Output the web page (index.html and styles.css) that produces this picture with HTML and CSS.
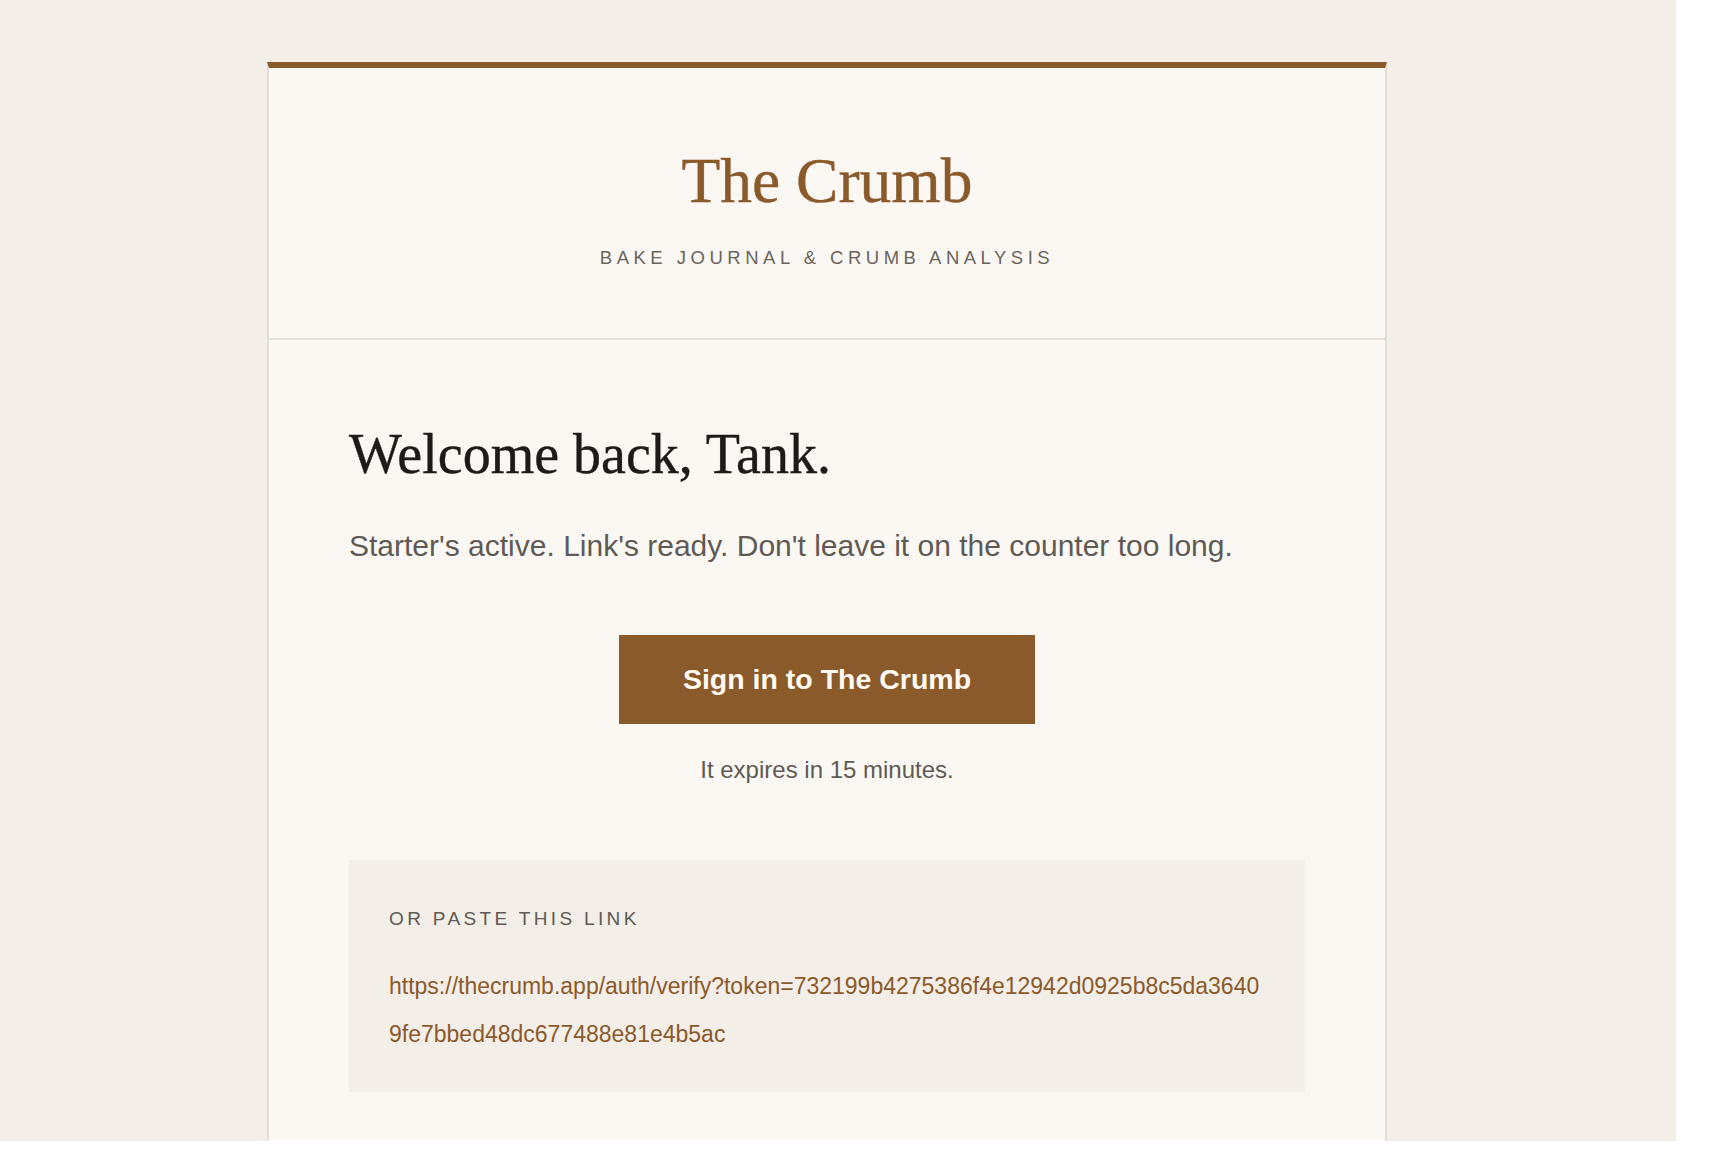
FILE: index.html
```html
<!DOCTYPE html>
<html lang="en">
<head>
<meta charset="utf-8">
<title>The Crumb — Sign in</title>
<link rel="stylesheet" href="styles.css">
</head>
<body>
<div class="page">
  <div class="card">
    <div class="header">
      <div class="brand">The Crumb</div>
      <div class="tagline">BAKE JOURNAL &amp; CRUMB ANALYSIS</div>
    </div>
    <div class="content">
      <h1 class="greeting">Welcome back, Tank.</h1>
      <p class="lead">Starter's active. Link's ready. Don't leave it on the counter too long.</p>
      <div class="cta">
        <a class="button" href="#">Sign in to The Crumb</a>
      </div>
      <p class="expires">It expires in 15 minutes.</p>
      <div class="linkbox">
        <div class="linklabel">OR PASTE THIS LINK</div>
        <a class="rawlink" href="#">https://thecrumb.app/auth/verify?token=732199b4275386f4e12942d0925b8c5da36409fe7bbed48dc677488e81e4b5ac</a>
      </div>
    </div>
  </div>
</div>
</body>
</html>
```

FILE: styles.css
```css
html, body {
  margin: 0;
  padding: 0;
  background: #ffffff;
}

.page {
  width: 1676px;
  height: 1141px;
  overflow: hidden;
  background: #f3eee7;
  padding: 62px 0 0 267px;
  box-sizing: border-box;
}

.card {
  width: 1120px;
  box-sizing: border-box;
  background: #fbf8f4;
  border: 2px solid #e5ddd3;
  border-top: 6px solid #8b5a2b;
}

.header {
  padding: 76px 0 68px;
  text-align: center;
  border-bottom: 2px solid #e6dfd6;
}

.brand {
  font-family: "Liberation Serif", "Times New Roman", serif;
  font-size: 63.5px;
  line-height: 74px;
  color: #8b5a2b;
  -webkit-text-stroke: 0.4px #8b5a2b;
}

.tagline {
  margin-top: 28px;
  font-family: "Liberation Sans", Arial, sans-serif;
  font-size: 18.5px;
  line-height: 24px;
  letter-spacing: 4.5px;
  color: #6a645c;
}

.content {
  padding: 82px 80px 120px;
}

.greeting {
  margin: 0;
  font-family: "Liberation Serif", "Times New Roman", serif;
  font-weight: normal;
  font-size: 56px;
  line-height: 64px;
  color: #1e1a17;
  -webkit-text-stroke: 0.4px #1e1a17;
}

.lead {
  margin: 40px 0 0;
  font-family: "Liberation Sans", Arial, sans-serif;
  font-size: 30px;
  line-height: 40px;
  color: #5f5a54;
}

.cta {
  margin-top: 69px;
  text-align: center;
  line-height: 0;
}

.button {
  display: inline-block;
  padding: 28px 64px;
  background: #8b5a2b;
  color: #fffaf3;
  font-family: "Liberation Sans", Arial, sans-serif;
  font-weight: bold;
  font-size: 28.5px;
  line-height: 33px;
  text-decoration: none;
}

.expires {
  margin: 30px 0 0;
  text-align: center;
  font-family: "Liberation Sans", Arial, sans-serif;
  font-size: 24px;
  line-height: 32px;
  color: #5f5a54;
}

.linkbox {
  margin-top: 74px;
  background: #f3eee7;
  padding: 47px 40px 34px;
}

.linklabel {
  font-family: "Liberation Sans", Arial, sans-serif;
  font-size: 19px;
  line-height: 24px;
  letter-spacing: 3.35px;
  color: #5f5a53;
}

.rawlink {
  display: block;
  margin-top: 31px;
  font-family: "Liberation Sans", Arial, sans-serif;
  font-size: 23px;
  line-height: 48px;
  color: #8b5a2b;
  text-decoration: none;
  word-break: break-all;
}
```
